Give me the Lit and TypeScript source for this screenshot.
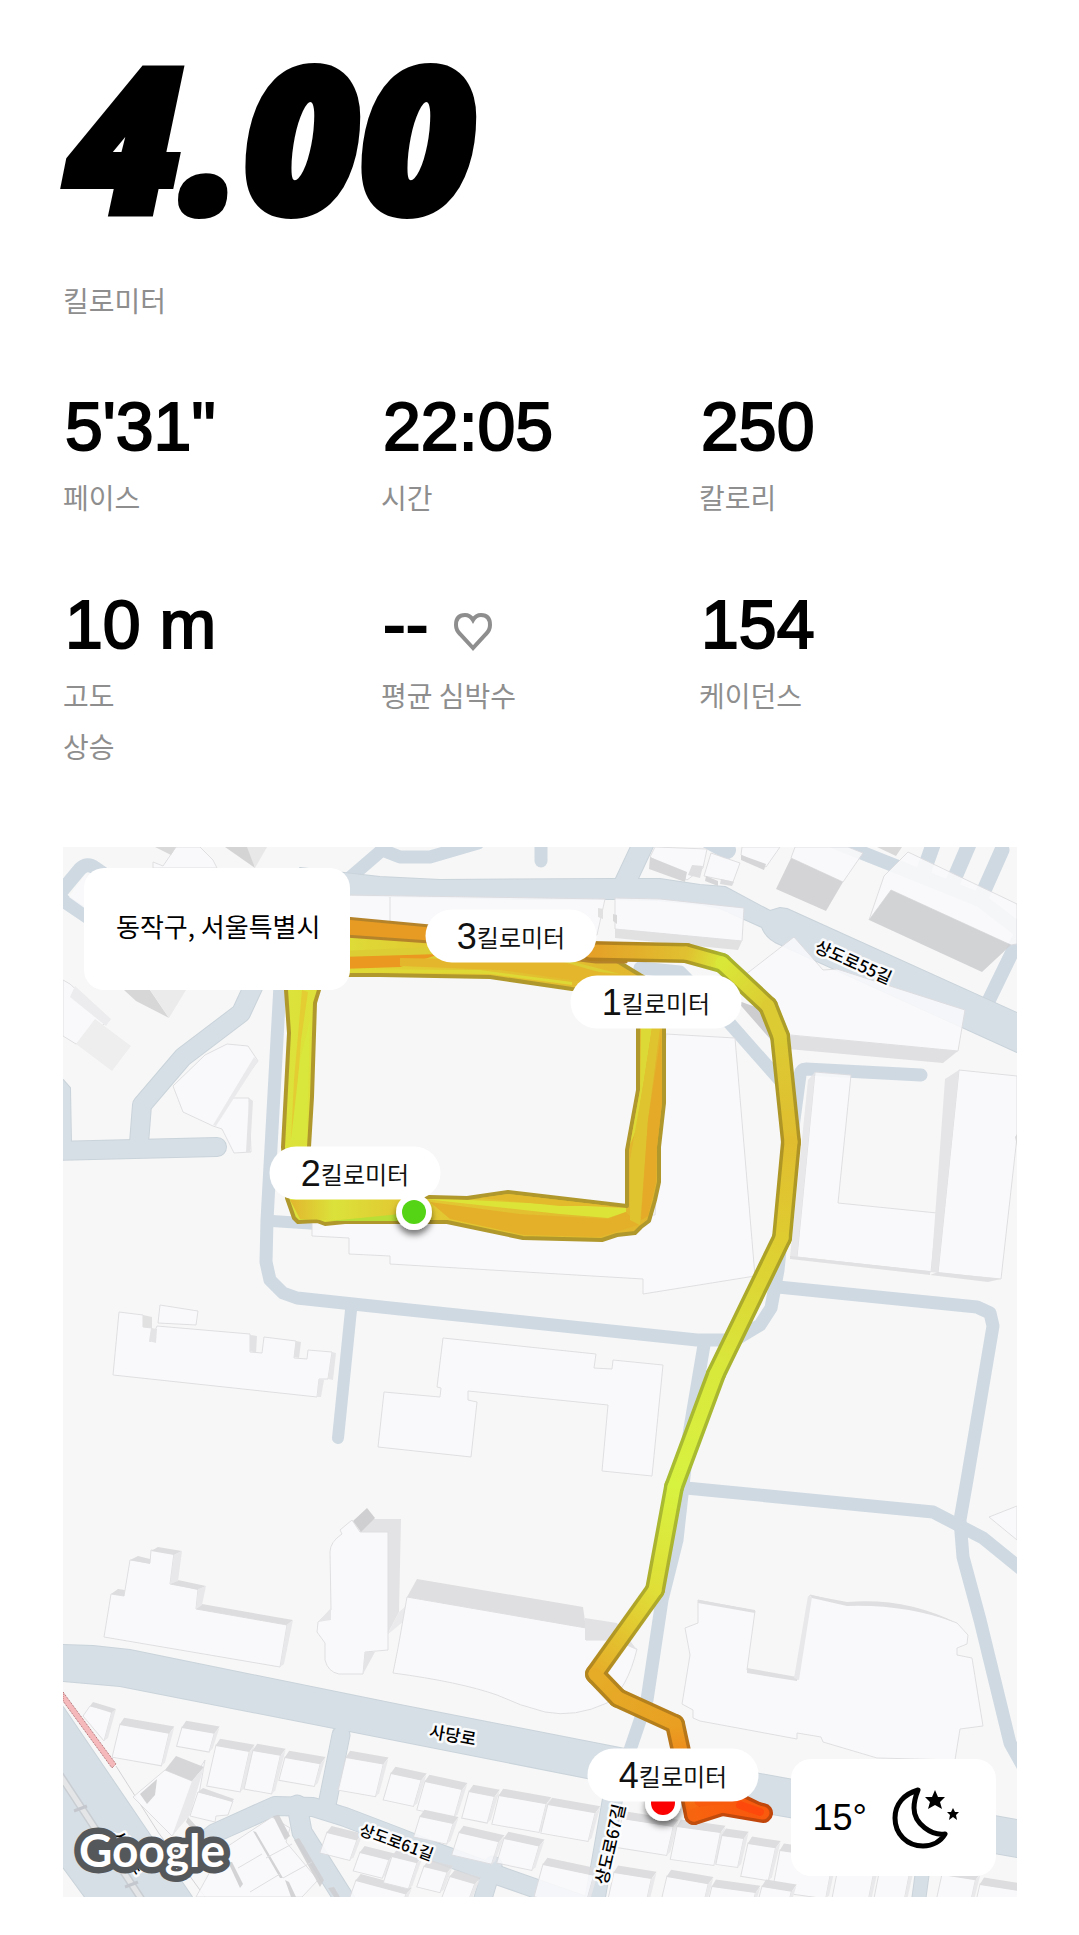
import { LitElement, html, css, svg } from "lit";
import { customElement, property } from "lit/decorators.js";

type Pt = [number, number];
interface Shape { d: string; fill: string; line?: boolean }
interface Stop { p: Pt; c: string }

const WHITE = "#fafafc";

/* Roads: path, width */
const mainRoads: [string, number][] = [
  ["M645 840L623 887", 21],
  ["M254 985L241 1013L183 1057L142 1105L139 1143", 19],
  ["M50 1151L217 1147", 19],
  ["M341 1735L326 1810", 18],
  ["M172 1866L215 1833L275 1806L313 1807L345 1817L400 1838L435 1852L500 1876L585 1906", 19],
  ["M297 1805L302 1832L348 1905", 20],
  ["M493 1865L481 1905", 18],
  ["M615 1785L594 1905", 20],
  ["M924 1860L918 1905", 14],
];

const mainAreas = [
  "M300 868L380 877L440 880L613 879L660 879L700 885L725 887L770 911L780 908L787 909L1017 1013V1052L775 942Q765 936 762 927L720 908L700 904L657 900L613 899L530 899L380 896L300 893Z",
  "M63 1645L93 1646L130 1650L400 1705L620 1748L760 1774L1017 1820V1857L760 1812L587 1778L400 1741L120 1686L63 1681Z",
  "M63 1707L192 1897H85L63 1867Z",
  "M63 1080L70 1088L71 1144H63Z",
];

const sideRoads: [string, number][] = [
  ["M55 899L80 869Q87 862 95 868L115 882", 14],
  ["M55 895L95 922", 14],
  ["M345 882L382 850L400 857L430 857L478 843", 13],
  ["M541 840L541 861", 13],
  ["M705 838L727 850", 18],
  ["M280 985L267 1220L266 1262L270 1280L283 1293L297 1298L400 1309L697 1340L735 1340L760 1325L771 1308L778 1270L790 1150L800 1075Q801 1069 806 1069L921 1075", 13],
  ["M272 1221L318 1224", 12],
  ["M351 1310L338 1438", 12],
  ["M640 968L680 972L725 1018L785 1086", 13],
  ["M778 1287L977 1307L990 1313L993 1326L967 1480L960 1520L963 1557L980 1620L1010 1743L1025 1770", 13],
  ["M686 1488L933 1512L983 1538L1025 1572", 13],
  ["M704 1345L688 1440L677 1540L662 1600L647 1700L630 1750", 13],
  ["M835 842L903 869L980 900L1022 932", 14],
  ["M934 842L922 876", 15],
  ["M970 842L952 884", 15],
  ["M1002 850L982 895", 15],
  ["M1022 932L989 1000", 14],
];

const buildings: Shape[] = [
  { d: "M153 862L163 866L176 847H200L213 860L217 868H153Z", fill: WHITE, line: true },
  { d: "M155 847H176L171 855Z", fill: "#d5d5d6" },
  { d: "M225 847H250L255 868Z", fill: "#d0d0d1" },
  { d: "M247 847H267L255 868Z", fill: "#e6e6e7" },
  { d: "M69 897L86 874L90 912Z", fill: WHITE },
  { d: "M63 980L70 984L110 1020L76 1044L63 1036Z", fill: WHITE, line: true },
  { d: "M95 1019L131 1046L112 1071L76 1044Z", fill: "#ededee" },
  { d: "M70 997L75 986L111 1019L106 1026Z", fill: "#ebebed" },
  { d: "M124 990H150L169 1018L136 1001Z", fill: "#d3d3d4" },
  { d: "M150 990H186L169 1018Z", fill: "#eaeaeb" },
  { d: "M227 1044L248 1046L258 1061L230 1098H249L251 1152L234 1153L222 1129L213 1126L183 1112L173 1086L205 1055Z", fill: WHITE, line: true },
  { d: "M254 1057L258 1061L216 1126L213 1125Z", fill: "#e9e9ec" },
  { d: "M249 1098L253 1101L250 1152L246 1152Z", fill: "#e2e2e4" },
  { d: "M345 895L605 899L597 935H345Z", fill: WHITE, line: true },
  { d: "M390 897V930", fill: "none", line: true },
  { d: "M598 908L603 909V919L598 917Z", fill: "#dedee0" },
  { d: "M615 898L660 899L744 908L742 941L615 929Z", fill: WHITE, line: true },
  { d: "M615 929L742 941L738 950L615 938Z", fill: "#dedee0" },
  { d: "M613 914L617 915V924L613 921Z", fill: "#d5d5d7" },
  { d: "M794 937L823 970L837 969L965 1010L958 1051L780 1034L745 975Z", fill: WHITE, line: true },
  { d: "M788 1035L958 1051L943 1063L788 1049Z", fill: "#dddde0" },
  { d: "M736 1000L771 1040L764 1010Z", fill: "#c8c8ca" },
  { d: "M795 847H848L863 853L843 882L791 858Z", fill: WHITE, line: true },
  { d: "M791 858L843 882L826 911L776 889Z", fill: "#d0d0d2" },
  { d: "M908 852L1017 904V944L1011 945L891 890L869 920L884 876Z", fill: WHITE, line: true },
  { d: "M891 890L1011 945L982 972L869 920Z", fill: "#cecfd1" },
  { d: "M877 847H902L896 856Z", fill: "#d5d5d7" },
  { d: "M655 847L707 849L703 868L687 880L650 857Z", fill: WHITE, line: true },
  { d: "M650 857L687 872L685 882L649 869Z", fill: "#d2d2d4" },
  { d: "M692 865L703 866L700 878L688 875Z", fill: "#dcdcde" },
  { d: "M711 853L740 863L733 882L704 876Z", fill: WHITE, line: true },
  { d: "M706 876L718 881V886L705 881Z", fill: "#d2d2d4" },
  { d: "M721 879L734 882L732 886L720 884Z", fill: "#d9d9db" },
  { d: "M742 847H780L766 867L741 855Z", fill: WHITE, line: true },
  { d: "M741 855L766 864L764 870L741 860Z", fill: "#d2d2d4" },
  { d: "M320 1215L312 1222V1236L349 1238V1254L390 1256V1264L643 1279V1294L755 1276L735 1038L666 1034L655 1215Z", fill: WHITE, line: true },
  { d: "M815 1072L851 1075L838 1203L937 1213L931 1272L797 1257Z", fill: WHITE, line: true },
  { d: "M815 1072L808 1080L790 1257H797Z", fill: "#e6e6e9" },
  { d: "M790 1256L930 1271V1275L790 1259Z", fill: "#dfdfe1" },
  { d: "M959 1070L1017 1076V1137L1001 1279L938 1273Z", fill: WHITE, line: true },
  { d: "M959 1070L945 1079L931 1272L938 1273Z", fill: "#e3e3e6" },
  { d: "M938 1272L1001 1279L988 1282L930 1275Z", fill: "#dfdfe1" },
  { d: "M1015 1137L1017 1134V1146Z", fill: "#d5d5d7" },
  { d: "M119 1312L143 1315V1327L152 1328L150 1342L157 1326L250 1334V1352L262 1353L264 1337L296 1341L294 1358L307 1359L308 1350L332 1352L328 1379H319L317 1397L113 1375Z", fill: WHITE, line: true },
  { d: "M143 1315L152 1317V1328L143 1327Z", fill: "#dededf" },
  { d: "M151 1328L157 1329L156 1343L149 1341Z", fill: "#e2e2e4" },
  { d: "M250 1335L257 1336L256 1353L250 1351Z", fill: "#e0e0e2" },
  { d: "M296 1341L301 1342L299 1358L294 1357Z", fill: "#e0e0e2" },
  { d: "M332 1352L336 1353L333 1380L328 1379Z", fill: "#e4e4e6" },
  { d: "M319 1379L324 1380L321 1397H317Z", fill: "#e4e4e6" },
  { d: "M160 1305L198 1311L196 1325L158 1323Z", fill: WHITE, line: true },
  { d: "M443 1338L596 1354L594 1368L612 1369L613 1360L663 1365L652 1476L602 1471L608 1405L468 1391V1400L477 1402L471 1457L378 1447L384 1392L440 1397L441 1388L437 1387Z", fill: WHITE, line: true },
  { d: "M360 1532L373 1519H401L399 1612L387 1635Z", fill: "#e1e1e3" },
  { d: "M387 1635L399 1612L407 1605L403 1622Z", fill: "#e9e9eb" },
  { d: "M352 1520L340 1530L342 1534Q330 1542 330 1552L331 1610L318 1622L317 1632L325 1643V1660Q328 1672 339 1674H363L365 1652L388 1650V1532H360Z", fill: WHITE, line: true },
  { d: "M318 1622L331 1608V1620Z", fill: "#e4e4e6" },
  { d: "M353 1521L367 1508L375 1518L361 1532Z", fill: "#cacacc" },
  { d: "M365 1652H375L363 1674Z", fill: "#e2e2e5" },
  { d: "M407 1597L586 1628V1640H615L637 1649Q627 1690 607 1703Q575 1718 545 1712Q520 1706 497 1695Q460 1682 393 1673L398 1648Z", fill: WHITE, line: true },
  { d: "M407 1597L417 1579L583 1607L586 1628Z", fill: "#dcdcde" },
  { d: "M585 1618L617 1623L637 1650L615 1640H585Z", fill: "#e0e0e3" },
  { d: "M151 1550L174 1553L170 1584L198 1589L196 1609L287 1625L280 1667L104 1637L111 1594L124 1596L130 1560L150 1563Z", fill: WHITE, line: true },
  { d: "M151 1551L158 1547L182 1551L174 1555ZM130 1560L138 1556L150 1559V1564ZM111 1594L118 1589L125 1590L124 1596ZM170 1584L178 1580L206 1586L198 1590ZM196 1609L202 1604L293 1620L287 1625Z", fill: "#dadadc" },
  { d: "M174 1555L182 1551L178 1581L170 1584ZM198 1589L206 1586L202 1605L196 1609ZM287 1625L293 1620L284 1664L280 1667Z", fill: "#e6e6e9" },
  { d: "M698 1600L755 1611L747 1670L797 1680L810 1595L847 1604Q905 1600 957 1623L968 1635L967 1644L957 1648V1655L972 1658L983 1726L960 1729L955 1760L877 1758L823 1742L821 1737L797 1733V1739L700 1721L693 1718V1710L682 1704L690 1655L685 1628L698 1623Z", fill: WHITE, line: true },
  { d: "M698 1600L755 1610V1613L698 1603ZM747 1668L797 1677V1681L747 1673ZM810 1595L847 1602Q905 1597 957 1623Q905 1604 847 1606L812 1598Z", fill: "#dcdcde" },
  { d: "M808 1596L812 1597L799 1680L794 1678Z", fill: "#e6e6e9" },
  { d: "M989 1517L1017 1506V1540Z", fill: WHITE, line: true },
  /* blocks beside the railway */
  { d: "M90 1706L112 1711L104 1741L83 1716Z", fill: WHITE, line: true },
  { d: "M90 1706L93 1702L116 1709L112 1713Z", fill: "#dadadc" },
  { d: "M112 1712L116 1709L108 1738L104 1741Z", fill: "#e6e6e9" },
  { d: "M165 1770L192 1781L205 1760L198 1800L172 1836L133 1797Z", fill: WHITE, line: true },
  { d: "M176 1756L204 1767L192 1781L165 1770Z", fill: "#d2d2d4" },
  { d: "M140 1794L157 1779L155 1795L147 1804Z", fill: "#cfcfd1" },
  { d: "M204 1767L190 1815L172 1836L192 1781Z", fill: "#e8e8ea" },
  { d: "M198 1792L233 1801L228 1815L216 1816L215 1822L190 1816Z", fill: WHITE, line: true },
  { d: "M198 1792L203 1788L234 1799L232 1802Z", fill: "#dadadc" },
  { d: "M188 1817L205 1836L202 1842L186 1822Z", fill: "#d5d5d7" },
  { d: "M272 1817L290 1828L286 1842L318 1880L302 1897H196L222 1850Z", fill: WHITE, line: true },
  { d: "M273 1816L279 1815L290 1836L285 1840ZM253 1831L256 1832L283 1878L280 1878ZM228 1862L232 1862L243 1884L240 1888ZM294 1840L299 1838L324 1880L320 1887ZM285 1880L289 1882L296 1897H291ZM328 1888L334 1887L340 1897H334Z", fill: "#cfcfd1" },
  { d: "M266 1858L292 1844M283 1878L312 1862M238 1868L262 1854M250 1892L280 1874", fill: "none", line: true },
];

/* Small houses: x, y, width, depth, angle */
const houses: [number, number, number, number, number][] = [
  [120, 1724, 50, 34, 10], [182, 1727, 33, 20, 10], [216, 1745, 34, 42, 10], [253, 1750, 28, 40, 10],
  [285, 1757, 36, 24, 10], [346, 1757, 38, 34, 10], [391, 1773, 31, 28, 12], [425, 1781, 38, 30, 12],
  [420, 1816, 34, 22, 12], [469, 1791, 26, 28, 11], [499, 1795, 48, 30, 10],
  [548, 1804, 48, 30, 10], [459, 1832, 41, 24, 13], [504, 1838, 36, 26, 12], [543, 1864, 52, 34, 12],
  [327, 1832, 31, 22, 14], [356, 1880, 52, 24, 15], [360, 1852, 30, 20, 14], [392, 1856, 26, 28, 14],
  [424, 1866, 24, 22, 14], [450, 1876, 26, 24, 16], [622, 1818, 52, 30, 9], [677, 1826, 44, 34, 8],
  [722, 1835, 22, 30, 8], [748, 1843, 28, 34, 9], [780, 1850, 54, 42, 8], [838, 1868, 36, 36, 8],
  [880, 1868, 30, 36, 8], [614, 1872, 38, 34, 9], [667, 1876, 42, 34, 10], [712, 1886, 44, 20, 8],
  [762, 1886, 30, 20, 9], [942, 1874, 34, 34, 9], [980, 1884, 44, 28, 9],
];

const streets: { t: string; x: number; y: number; r: number; s: number }[] = [
  { t: "상도로55길", x: 854, y: 961, r: 24, s: 17 },
  { t: "사당로", x: 453, y: 1734, r: 10, s: 17 },
  { t: "상도로61길", x: 397, y: 1841, r: 20, s: 16 },
  { t: "상도로67길", x: 609, y: 1844, r: -77, s: 17 },
  { t: "사당로", x: 130, y: 1852, r: 58, s: 17 },
];

const track: Stop[] = [
  { p: [590, 951], c: "#e5a027" },
  { p: [686, 953], c: "#e0c030" },
  { p: [722, 963], c: "#d9e838" },
  { p: [768, 1006], c: "#dccb33" },
  { p: [780, 1036], c: "#dccb33" },
  { p: [791, 1142], c: "#e0bd2f" },
  { p: [782, 1238], c: "#dfcc31" },
  { p: [716, 1374], c: "#d9e93c" },
  { p: [674, 1487], c: "#d8f240" },
  { p: [655, 1590], c: "#dfdf38" },
  { p: [595, 1674], c: "#e6ac28" },
  { p: [618, 1698], c: "#e6a826" },
  { p: [675, 1724], c: "#e9a022" },
  { p: [682, 1756], c: "#ee8a1c" },
  { p: [694, 1815], c: "#f7640f" },
  { p: [722, 1806], c: "#f95d0e" },
  { p: [763, 1813], c: "#f7580e" },
];

const shade = (hex: string) =>
  "#" + [1, 3, 5].map((i) => Math.round(parseInt(hex.slice(i, i + 2), 16) * 0.78).toString(16).padStart(2, "0")).join("");

const houseShape = ([x, y, w, d, r]: (typeof houses)[number]) => svg`
  <g transform="translate(${x} ${y}) rotate(${r})">
    <path class="line" fill="${WHITE}" d="M0 0H${w}L${w - 2} ${d}H-2Z"/>
    <path fill="#dadadc" d="M0 0L3 -7H${w + 4}L${w} 1H0Z"/>
    <path fill="#e8e8ea" d="M${w} 1L${w + 4} -6L${w + 1} ${d - 4}L${w - 2} ${d}Z"/>
  </g>`;

@customElement("stat-item")
export class StatItem extends LitElement {
  @property() value = "";
  @property() label = "";
  @property({ type: Boolean }) heart = false;

  static styles = css`
    :host { display: block; }
    .value {
      display: flex; align-items: center; gap: 26px; padding-left: 2px;
      font: 500 68px/80px "Liberation Sans", Arial, sans-serif;
      color: #000; -webkit-text-stroke: 2px #000; white-space: pre;
    }
    .label {
      margin-top: 6px; white-space: pre-line; color: #8e8e8e;
      font: 400 28px/51px "Noto Sans CJK KR", sans-serif;
    }
    .heart { width: 38px; height: 38px; margin-top: 16px; }
  `;

  render() {
    return html`
      <div class="value">${this.value}${this.heart
        ? html`<svg class="heart" viewBox="0 0 38 38" aria-hidden="true">
            <path d="M19 35L6 21Q2 17 2 12Q2 2 11 2Q16 2 19 7Q22 2 27 2Q36 2 36 12Q36 17 32 21Z" fill="none" stroke="#8e8e8e" stroke-width="4"/>
          </svg>`
        : ""}</div>
      <div class="label">${this.label}</div>`;
  }
}

@customElement("route-map")
export class RouteMap extends LitElement {
  static styles = css`
    :host { display: block; position: relative; overflow: hidden; aspect-ratio: 954 / 1050; background: #f7f7f7; }
    .canvas { display: block; width: 100%; height: 100%; }
    .line { stroke: #dcdcdf; stroke-width: 1; }
    .street {
      font-family: "Noto Sans CJK KR", sans-serif; font-weight: 500; text-anchor: middle; dominant-baseline: central;
      fill: #000; stroke: #fff; stroke-opacity: 0.85; stroke-width: 5; stroke-linejoin: round; paint-order: stroke;
    }
    .google {
      font: 700 46px Lato, sans-serif; fill: #fff; stroke: #55585b;
      stroke-width: 13; stroke-linejoin: round; paint-order: stroke;
    }
    .pill {
      position: absolute; display: flex; align-items: center; justify-content: center; box-sizing: border-box;
      width: 171px; height: 53px; border-radius: 27px; background: #fff; color: #111;
      transform: translate(-50%, -50%); white-space: nowrap;
      font: 400 24px/53px "Noto Sans CJK KR", sans-serif;
    }
    .pill b { font: 400 36px/53px "Liberation Sans", Arial, sans-serif; }
    .place, .weather { position: absolute; display: flex; align-items: center; box-sizing: border-box; background: #fff; border-radius: 20px; color: #000; }
    .place { top: 21px; left: 21px; padding: 0 30px 6px 32px; height: 122px; font: 400 26px/36px "Noto Sans CJK KR", sans-serif; }
    .weather { right: 21px; bottom: 21px; gap: 25px; padding: 0 36px 0 22px; height: 117px; font: 400 36px/42px "Liberation Sans", Arial, sans-serif; }
    .moon { width: 68px; height: 64px; }
  `;

  private pill(n: number, x: number, y: number) {
    return html`<div class="pill" style="left:${((x - 63) / 954) * 100}%;top:${((y - 847) / 1050) * 100}%"><b>${n}</b>킬로미터</div>`;
  }

  private seg(i: number, dark: boolean) {
    const a = track[i], b = track[i + 1];
    return svg`<path d="M${a.p[0]} ${a.p[1]}L${b.p[0]} ${b.p[1]}" stroke="url(#${dark ? "d" : "l"}${i})" stroke-width="${dark ? 20 : 13}"/>`;
  }

  render() {
    const idx = track.slice(1).map((_, i) => i);
    return html`
      <svg class="canvas" viewBox="63 847 954 1050" role="img" aria-label="Map">
        <defs>
          ${idx.map((i) => ["d", "l"].map((k) => svg`
            <linearGradient id="${k}${i}" gradientUnits="userSpaceOnUse" x1="${track[i].p[0]}" y1="${track[i].p[1]}" x2="${track[i + 1].p[0]}" y2="${track[i + 1].p[1]}">
              <stop offset="0" stop-color="${k === "d" ? shade(track[i].c) : track[i].c}"/>
              <stop offset="1" stop-color="${k === "d" ? shade(track[i + 1].c) : track[i + 1].c}"/>
            </linearGradient>`))}
          <linearGradient id="loop" gradientUnits="userSpaceOnUse" x1="284" y1="0" x2="666" y2="0">
            <stop offset="0" stop-color="#dce33a"/><stop offset="0.12" stop-color="#dddf38"/>
            <stop offset="0.4" stop-color="#e2c832"/><stop offset="1" stop-color="#e2b42c"/>
          </linearGradient>
          <linearGradient id="base" gradientUnits="userSpaceOnUse" x1="290" y1="0" x2="400" y2="0">
            <stop offset="0" stop-color="#e2b62e"/><stop offset="0.4" stop-color="#dbe23a"/><stop offset="1" stop-color="#e2c832"/>
          </linearGradient>
          <filter id="shadow" x="-50%" y="-50%" width="200%" height="220%">
            <feDropShadow dx="0" dy="5" stdDeviation="3" flood-color="#000" flood-opacity="0.5"/>
          </filter>
        </defs>

        <g fill="none" stroke="#cfd9e2" stroke-linecap="round" stroke-linejoin="round">
          ${sideRoads.map(([d, w]) => svg`<path d="${d}" stroke-width="${w}"/>`)}
        </g>
        <g fill="none" stroke="#c9d3da" stroke-linecap="round" stroke-linejoin="round">
          ${mainRoads.map(([d, w]) => svg`<path d="${d}" stroke-width="${w + 1}"/>`)}
          ${mainAreas.map((d) => svg`<path d="${d}" stroke-width="2"/>`)}
        </g>
        <g fill="none" stroke="#d7dfe6" stroke-linecap="round" stroke-linejoin="round">
          ${mainRoads.map(([d, w]) => svg`<path d="${d}" stroke-width="${w - 1}"/>`)}
          ${mainAreas.map((d) => svg`<path d="${d}" fill="#d7dfe6" stroke="none"/>`)}
        </g>

        <path d="M60 1775L142 1900" fill="none" stroke="#c8cdd2" stroke-width="8"/>
        <path d="M60 1775L142 1900" fill="none" stroke="#e3e5e7" stroke-width="5"/>
        <path d="M74 1811L87 1806M125 1887L138 1882" stroke="#c4c8ce" stroke-width="3"/>
        <path d="M116 1766L158 1832L205 1897" fill="none" stroke="#d3d3d6" stroke-width="1"/>
        <path d="M63 1692L116 1764L112 1768L63 1701Z" fill="#f5b9bb" stroke="#a8666a" stroke-dasharray="1 1"/>

        <g opacity="0.88">
          ${buildings.map((b) => svg`<path class="${b.line ? "line" : ""}" d="${b.d}" fill="${b.fill}"/>`)}
          ${houses.map(houseShape)}
        </g>

        ${streets.map((s) => svg`<text class="street" font-size="${s.s}" transform="translate(${s.x} ${s.y}) rotate(${s.r})">${s.t}</text>`)}

        <g stroke-linejoin="round" stroke-linecap="round">
          <path fill-rule="evenodd" fill="url(#loop)" stroke="#b0982c" stroke-width="4"
            d="M286 990L289 1033L283 1147L287 1198L294 1218L298 1222L317 1221L325 1224L345 1222L430 1222L447 1222L523 1238L602 1240L617 1235L635 1233L641 1227L649 1221L655 1200L659 1182L659 1147L664 1103L664 1028L666 990L640 975L617 961L500 940L425 935L340 935L286 950Z
               M319 990L315 1003L312 1097L309 1147L309 1196L430 1197L467 1198L508 1192L627 1206L627 1150L638 1090L638 1028L638 990L572 989L490 977L380 975L319 975Z"/>
          <path fill="url(#base)" d="M290 1200L400 1199L400 1216L330 1220L300 1219Z"/>
          <path fill="#b9de35" d="M330 1221L400 1214V1221Z"/>
          <path fill="#e3cd33" d="M302 990L308 992L301 1040L296 1110L291 1140L294 1080Z"/>
          <path fill="#d9e63b" d="M300 1060L310 1020L307 1140H291Z"/>
          <path fill="#dce438" d="M425 1199L470 1200L626 1208V1212L608 1218L560 1214Z"/>
          <path fill="#e4b02a" d="M430 1202L520 1214L608 1219L626 1212L638 1225L600 1237L524 1235L450 1219Z"/>
          <path fill="#e2ba2c" d="M480 1198L508 1194L610 1206L560 1206Z"/>
          <path fill="#dcd936" d="M641 1028L652 1028L644 1080L636 1130L630 1145L640 1090Z"/>
          <path fill="#dfc430" d="M652 1028L660 1028L648 1120L640 1225L630 1220L630 1160L644 1080Z"/>
          <path fill="#e4aa28" d="M661 1035L662 1103L657 1147L656 1182L648 1216L641 1220L648 1120Z"/>
          <path fill="#e89b23" stroke="#b5842a" stroke-width="3" d="M345 918L430 926L596 944L626 962L596 962L430 942L345 936Z"/>
          <path fill="#dccd35" d="M340 951L430 947L570 961L620 974L560 968L430 958L340 960Z"/>
          <path fill="#ea981f" d="M340 957L440 954L400 967L340 969Z"/>
          <path fill="#e4b62c" d="M400 958L560 961L620 978L600 984L500 970L400 966Z"/>
          <path fill="#dfd935" d="M340 969L480 970L572 982V985L490 974L340 972Z"/>
        </g>

        <g fill="none" stroke-linecap="round" stroke-linejoin="round">
          ${idx.map((i) => this.seg(i, true))}
          <path d="M694 1798L730 1797L763 1813" stroke="#c1490b" stroke-width="17"/>
          ${idx.map((i) => this.seg(i, false))}
          <path d="M700 1801L730 1798L763 1813" stroke="#f95b0e" stroke-width="11"/>
          <path d="M740 1805L760 1812" stroke="#fd4a0c" stroke-width="8"/>
        </g>

        <circle cx="414" cy="1212" r="18" fill="#fff" filter="url(#shadow)"/>
        <circle cx="414" cy="1212" r="12" fill="#55d416"/>
        <circle cx="663" cy="1803" r="18" fill="#fff" filter="url(#shadow)"/>
        <circle cx="663" cy="1803" r="12" fill="#fb0101"/>

        <text class="google" x="79" y="1867">Google</text>
      </svg>

      ${this.pill(3, 511, 936)} ${this.pill(1, 656, 1002)} ${this.pill(2, 355, 1173)} ${this.pill(4, 673, 1775)}

      <div class="place">동작구, 서울특별시</div>
      <div class="weather">
        <span>15°</span>
        <svg class="moon" viewBox="0 0 68 64" aria-hidden="true">
          <path d="M26 4C12 8 3 18 3 32C3 48 15 60 31 60C41 60 49 55 53 48C40 50 22 38 22 22C22 14 24 9 26 4Z"
            fill="none" stroke="#000" stroke-width="5" stroke-linejoin="round"/>
          <path d="M43 4L46 11L53 11L48 16L50 23L43 19L36 23L38 16L33 11L40 11ZM61 22L63 26L67 26L64 29L65 34L61 31L57 34L58 29L55 26L59 26Z" fill="#000"/>
        </svg>
      </div>`;
  }
}

@customElement("app-root")
export class AppRoot extends LitElement {
  static styles = css`
    :host { display: block; min-height: 100vh; background: #fff; box-sizing: border-box; padding: 36px 62px 38px 63px; }
    .total {
      margin: 0; padding-left: 3px; font: italic 800 200px/200px "Open Sans", sans-serif;
      color: #000; -webkit-text-stroke: 8px #000;
    }
    .unit { margin: 44px 0 0; font: 400 28px/40px "Noto Sans CJK KR", sans-serif; color: #8e8e8e; }
    .stats { display: grid; grid-template-columns: repeat(3, 1fr); row-gap: 61px; margin: 66px 0 75px; }
  `;

  render() {
    return html`
      <main>
        <h1 class="total">4.00</h1>
        <p class="unit">킬로미터</p>
        <section class="stats">
          <stat-item value=${"5'31\""} label="페이스"></stat-item>
          <stat-item value="22:05" label="시간"></stat-item>
          <stat-item value="250" label="칼로리"></stat-item>
          <stat-item value="10 m" label=${"고도\n상승"}></stat-item>
          <stat-item value="--" label="평균 심박수" heart></stat-item>
          <stat-item value="154" label="케이던스"></stat-item>
        </section>
        <route-map></route-map>
      </main>`;
  }
}
